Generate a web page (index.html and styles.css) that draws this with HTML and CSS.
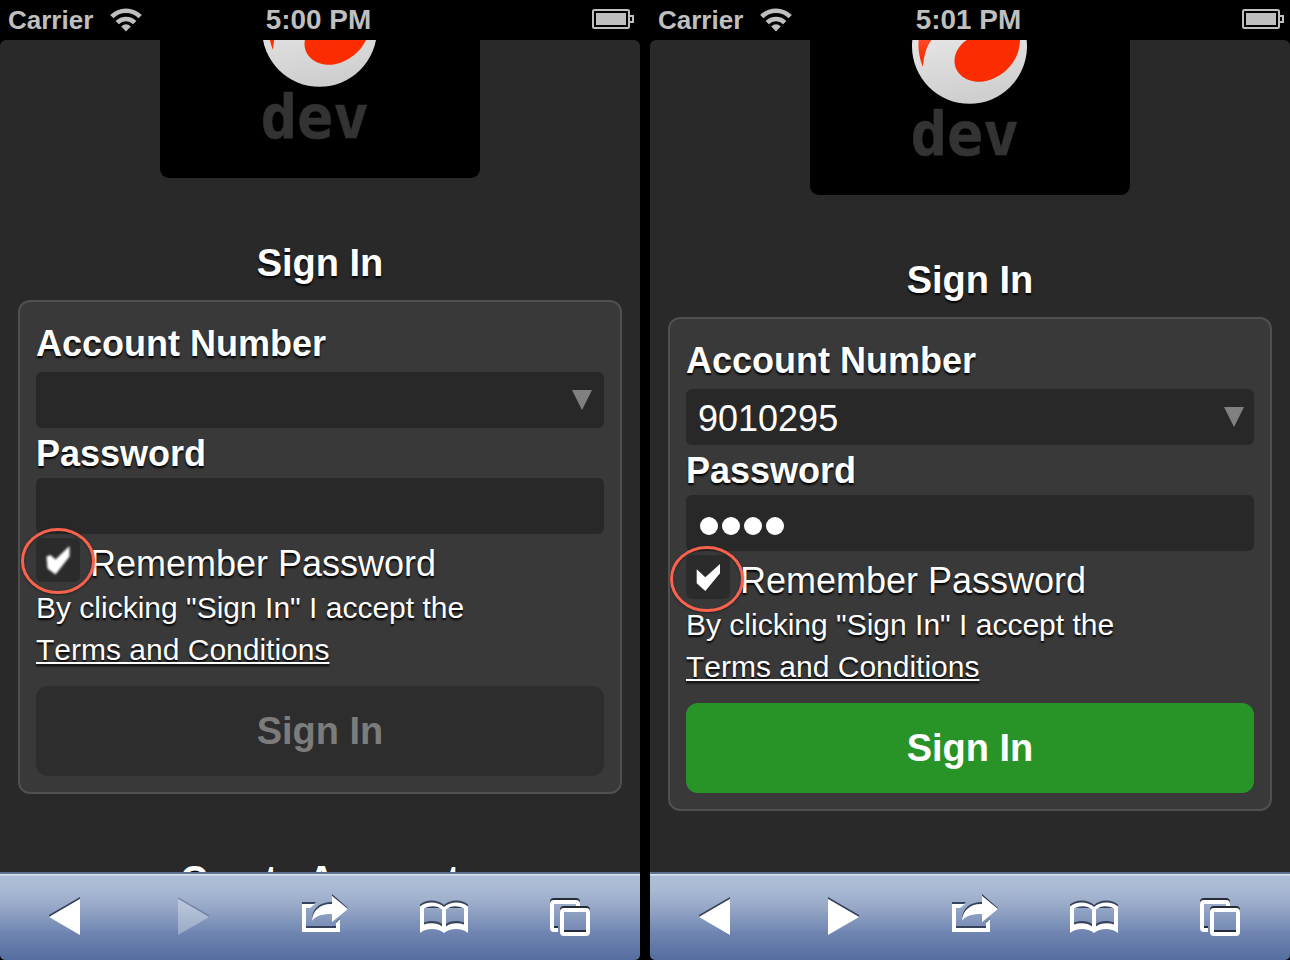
FILE: index.html
```html
<!DOCTYPE html>
<html lang="en">
<head>
<meta charset="utf-8">
<title>Sign In</title>
<link rel="stylesheet" href="styles.css">
</head>
<body>
<svg class="defs" width="0" height="0">
  <defs>
    <linearGradient id="ball" x1="0" y1="0" x2="0.15" y2="1"><stop offset="0" stop-color="#f5f5f5"/><stop offset="1" stop-color="#cfcfcf"/></linearGradient>
    <linearGradient id="flame" x1="0" y1="0" x2="0" y2="1"><stop offset="0" stop-color="#ff4a2a"/><stop offset="0.6" stop-color="#fb2f00"/></linearGradient>
    <symbol id="logo" viewBox="0 0 320 155">
      <circle cx="159.500" cy="6.300" r="57.500" fill="url(#ball)"/>
      <path d="M108.500 0C108 11 110 20 113 27C113.500 17 116 7 121.500 0Z" fill="url(#flame)"/>
      <path d="M156.700 0C148 6 144.500 14 144.500 21C144.500 32 154 41.800 169 41.800C186 41.800 209.500 26 210 0Z" fill="#fb2d00"/>
      <text x="155" y="115" text-anchor="middle" class="logo-text">dev</text>
    </symbol>
    <symbol id="wifi" viewBox="0 0 32 24">
      <g fill="none" stroke="#bfbfbf" stroke-width="4.600"><path d="M1.800 8.600a20 20 0 0 1 28.400 0"/><path d="M7.200 14.600a12.400 12.400 0 0 1 17.600 0"/></g>
      <path d="M16 23.400L11.200 18.500Q16 14 20.800 18.500Z" fill="#bfbfbf"/>
    </symbol>
    <symbol id="battery" viewBox="0 0 42 20">
      <rect x="1" y="1" width="36" height="18" rx="1.500" fill="none" stroke="#bfbfbf" stroke-width="2"/>
      <rect x="4" y="4" width="30" height="12" fill="#bfbfbf"/>
      <path d="M38 7h3v6h-3" fill="none" stroke="#bfbfbf" stroke-width="2"/>
    </symbol>
    <symbol id="back" viewBox="49 0 31 88"><path d="M80 25L49 43v2l31-18z" fill="#36435a"/><path d="M80 27v36L49 45z" fill="#fff"/></symbol>
    <symbol id="forward" viewBox="178 0 31 88"><path d="M178 25l31 18v2l-31-18z" fill="#36435a"/><path d="M178 27v36l31-18z" fill="#fff"/></symbol>
    <symbol id="share" viewBox="302 0 46 88">
      <path d="M302 30h14l-2 2h-12zM306 54h30v2h-30zM336 50l4-4v2l-4 4zM332 22l16 14v2l-16-14zM312 48c0-12 8-18 20-18v2c-12 0-20 7-20 18z" fill="#36435a"/>
      <path d="M302 32h13l-5 4h-4v20h30v-5l4-4v13h-38z" fill="#fff"/>
      <path d="M332 24l16 13-16 13v-8c-9 0-16 1-20 7c1-11 8-17 20-17z" fill="#fff"/>
    </symbol>
    <symbol id="book" viewBox="420 0 48 88">
      <path d="M420 32.500C426 27 438 27 444 33C450 27 462 27 468 32.500V36H420ZM424 50.500C430 48 438 48.500 442 52v4h-18zM446 52C450 48.500 458 48 464 50.500V56h-18z" fill="#36435a"/>
      <path fill-rule="evenodd" d="M420 34.500C426 29 438 29 444 35C450 29 462 29 468 34.500V61C462 55.500 450 55.500 444 61C438 55.500 426 55.500 420 61ZM424 36.500V52.500C430 50.500 438 51 442 54.500V37.500C438 33.500 430 33 424 36.500ZM464 36.500V52.500C458 50.500 450 51 446 54.500V37.500C450 33.500 458 33 464 36.500Z" fill="#fff"/>
    </symbol>
    <symbol id="tabs" viewBox="550 0 40 88">
      <g fill="none" stroke-width="4">
        <path d="M558 56h-4q-2 0-2-2V30q0-2 2-2h22q2 0 2 2v4" stroke="#252c38"/>
        <path d="M558 58h-4q-2 0-2-2V32q0-2 2-2h22q2 0 2 2v2" stroke="#fff"/>
        <rect x="562" y="36" width="26" height="24" rx="2" stroke="#252c38"/>
        <rect x="562" y="38" width="26" height="24" rx="2" stroke="#fff"/>
      </g>
    </symbol>
    <symbol id="check" viewBox="0 0 44 44"><path d="M10.700 14.300l8.600 8L34 9v9.300L19.300 36l-8.600-7.700z" fill="#fff"/></symbol>
    <symbol id="check-soft" viewBox="0 0 44 44"><path d="M10.500 18.500l4-1.500 5 4.500L33.500 8v10.500L19.500 36.500l-8-6z" fill="#fff"/></symbol>
    <symbol id="ring" viewBox="0 0 80 72"><ellipse cx="40" cy="36" rx="35.500" ry="31.500" fill="none" stroke="#f9634e" stroke-width="3"/></symbol>
  </defs>
</svg>
<main class="screens">
  <section class="phone">
    <header class="status">
      <div class="network"><span>Carrier</span><svg class="wifi"><use href="#wifi"/></svg></div>
      <time>5:00 PM</time>
      <svg class="battery"><use href="#battery"/></svg>
    </header>
    <div class="page">
      <div class="logo short"><svg width="320" height="155"><use href="#logo"/></svg></div>
      <h1>Sign In</h1>
      <form class="card">
        <label class="field-label first">Account Number</label>
        <div class="field"><span></span><svg class="caret" viewBox="0 0 20 20"><path d="M0 0h20L10 20z"/></svg></div>
        <label class="field-label">Password</label>
        <div class="field"></div>
        <div class="remember">
          <span class="checkbox"><svg class="check soft"><use href="#check-soft"/></svg><svg class="ring"><use href="#ring"/></svg></span>
          <span class="remember-text">Remember Password</span>
        </div>
        <p class="legal">By clicking "Sign In" I accept the<br><a>Terms and Conditions</a></p>
        <button type="button" class="submit disabled">Sign In</button>
      </form>
      <h1 class="next">Create Account</h1>
    </div>
    <nav class="toolbar">
      <svg class="back"><use href="#back"/></svg>
      <svg class="forward dim"><use href="#forward"/></svg>
      <svg class="share"><use href="#share"/></svg>
      <svg class="book"><use href="#book"/></svg>
      <svg class="tabs"><use href="#tabs"/></svg>
    </nav>
  </section>
  <section class="phone">
    <header class="status">
      <div class="network"><span>Carrier</span><svg class="wifi"><use href="#wifi"/></svg></div>
      <time>5:01 PM</time>
      <svg class="battery"><use href="#battery"/></svg>
    </header>
    <div class="page">
      <div class="logo"><svg width="320" height="155"><use href="#logo"/></svg></div>
      <h1>Sign In</h1>
      <form class="card">
        <label class="field-label first">Account Number</label>
        <div class="field"><span>9010295</span><svg class="caret wide" viewBox="0 0 20 20"><path d="M0 0h20L10 20z"/></svg></div>
        <label class="field-label">Password</label>
        <div class="field dots"><i></i><i></i><i></i><i></i></div>
        <div class="remember">
          <span class="checkbox"><svg class="check"><use href="#check"/></svg><svg class="ring ring-right"><use href="#ring"/></svg></span>
          <span class="remember-text">Remember Password</span>
        </div>
        <p class="legal">By clicking "Sign In" I accept the<br><a>Terms and Conditions</a></p>
        <button type="button" class="submit">Sign In</button>
      </form>
    </div>
    <nav class="toolbar">
      <svg class="back"><use href="#back"/></svg>
      <svg class="forward"><use href="#forward"/></svg>
      <svg class="share"><use href="#share"/></svg>
      <svg class="book"><use href="#book"/></svg>
      <svg class="tabs"><use href="#tabs"/></svg>
    </nav>
  </section>
</main>
</body>
</html>
```
FILE: styles.css
```css
* { box-sizing: border-box; }
body { margin: 0; background: #000; font-family: "Liberation Sans", Arial, sans-serif; color: #fff; overflow: hidden; }
svg { display: block; flex: none; }
.defs { position: absolute; }
.screens { display: flex; gap: 10px; width: 1290px; height: 960px; }
.phone { width: 640px; height: 960px; display: flex; flex-direction: column; }
.status { height: 40px; padding: 0 6px 2px 8px; display: grid; grid-template-columns: 1fr auto 1fr; align-items: center; color: #bfbfbf; font-weight: bold; }
.network { display: flex; align-items: center; gap: 17px; font-size: 26px; line-height: 38px; padding-top: 1px; }
.wifi { width: 32px; height: 24px; margin-top: -1px; }
.status time { font-size: 27.900px; line-height: 38px; margin: 0 5px 0 0; }
.battery { width: 42px; height: 20px; justify-self: end; margin-top: -1px; }
.page { height: 832px; overflow: hidden; background: #292929; border-radius: 6px 6px 0 0; padding: 0 18px; }
.logo { width: 320px; height: 155px; margin: 0 auto; background: #000; border-radius: 0 0 9px 9px; overflow: hidden; display: flex; align-items: flex-end; }
.logo.short { height: 138px; }
.logo-text { font: bold 60px "DejaVu Sans Mono", monospace; fill: #333; stroke: #333; stroke-width: .6px; }
h1 { margin: 0; height: 122px; padding-top: 48px; font-size: 38px; line-height: 74px; text-align: center; text-shadow: 0 2px 2px #000; }
h1.next { padding-top: 49px; }
.card { height: 494px; padding: 16px; border: 2px solid #505050; border-radius: 12px; background: #393939; display: flex; flex-direction: column; }
.field-label { height: 50px; line-height: 51px; font-size: 36px; font-weight: bold; text-shadow: 0 2px 2px #000; }
.field-label.first { height: 54px; }
.field { height: 56px; background: #282828; border-radius: 6px; padding: 4px 10px 0 12px; display: flex; justify-content: space-between; font-size: 36px; line-height: 52px; }
.caret { width: 20px; height: 20px; margin: 14px 2px 0 0; fill: #808080; }
.caret.wide { margin-right: 0; }
.dots { padding: 22px 14px 0; justify-content: flex-start; gap: 4px; }
.dots i { width: 18px; height: 18px; border-radius: 50%; background: #fff; }
.remember { height: 49px; padding-top: 4px; display: flex; gap: 10px; font-size: 36px; line-height: 51px; text-shadow: 0 2px 2px #000; }
.checkbox { position: relative; width: 44px; height: 44px; border-radius: 6px; background: #2b2b2b; }
.check { width: 44px; height: 44px; }
.check.soft { filter: blur(1px); }
.ring { position: absolute; left: -18px; top: -13px; width: 80px; height: 72px; z-index: 3; filter: drop-shadow(0 1px 1px rgba(0, 0, 0, .4)); }
.ring-right { left: -19px; top: -12px; }
.legal { margin: 4px 0 15px; height: 84px; font-size: 30px; line-height: 42px; text-shadow: 0 2px 2px #000; }
.legal a { font-kerning: none; text-decoration: underline; text-decoration-thickness: 2px; text-underline-offset: 2px; text-decoration-skip-ink: none; }
.submit { height: 90px; padding: 0; border: 0; border-radius: 12px; background: #289428; color: #fff; font: bold 38px "Liberation Sans", Arial, sans-serif; }
.submit.disabled { background: #2d2d2d; color: #7c7c7c; }
.toolbar { height: 88px; display: flex; padding-left: 49px; border-radius: 0 0 5px 5px; background: linear-gradient(#5a7192 0 2px, #dce4ef 2px 3px, #b0bfd8 4px, #a9b9d3 18px, #97a8c7 35px, #768bb5 57px, #7085b1 60px, #556e9f 88px); }
.toolbar svg { height: 88px; }
.back, .forward { width: 31px; }
.forward { margin-left: 98px; }
.dim { opacity: .3; }
.share { width: 46px; margin-left: 93px; }
.book { width: 48px; margin-left: 72px; }
.tabs { width: 40px; margin-left: 82px; }
```
